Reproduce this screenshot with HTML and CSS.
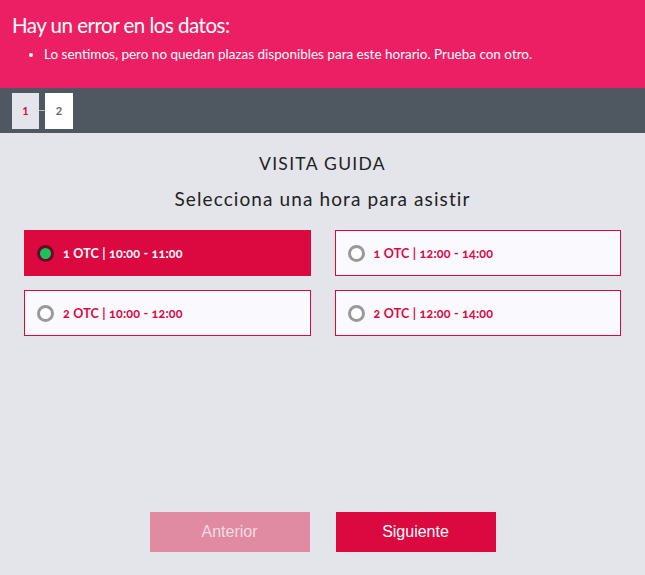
FILE: index.html
```html
<!DOCTYPE html>
<html lang="es">
<head>
    <meta charset="UTF-8">
    <meta name="viewport" content="width=device-width, initial-scale=1.0">
    <title>Visita guiada</title>
    <link rel="stylesheet" href="styles.css">
</head>
<body>
    <div class="error-box">
        <h1>Hay un error en los datos:</h1>
        <ul>
            <li>Lo sentimos, pero no quedan plazas disponibles para este horario. Prueba con otro.</li>
        </ul>
    </div>

    <div class="steps">
        <div class="step current">1</div>
        <div class="step-line"></div>
        <div class="step">2</div>
    </div>

    <div class="content">
        <h2 class="title">VISITA GUIDA</h2>
        <p class="subtitle">Selecciona una hora para asistir</p>

        <div class="slots">
            <label class="slot selected">
                <span class="radio"></span>
                <span class="slot-text">1 OTC | 10:00 - 11:00</span>
            </label>
            <label class="slot">
                <span class="radio"></span>
                <span class="slot-text">1 OTC | 12:00 - 14:00</span>
            </label>
            <label class="slot">
                <span class="radio"></span>
                <span class="slot-text">2 OTC | 10:00 - 12:00</span>
            </label>
            <label class="slot">
                <span class="radio"></span>
                <span class="slot-text">2 OTC | 12:00 - 14:00</span>
            </label>
        </div>
    </div>

    <div class="nav-buttons">
        <button class="btn disabled">Anterior</button>
        <button class="btn">Siguiente</button>
    </div>
</body>
</html>
```

FILE: styles.css
```css
body {
    margin: 0;
    height: 575px;
    font-family: Lato, "Open Sans", sans-serif;
    background-color: #e4e5ea;
    display: flex;
    flex-direction: column;
}
.error-box {
    background-color: #ec1f64;
    color: #fff;
    padding: 11px 12px 0;
    height: 77px;
}
.error-box h1 {
    margin: 0;
    font-size: 20.5px;
    font-weight: 400;
    letter-spacing: -0.5px;
    line-height: 28px;
}
.error-box ul {
    margin: 5px 0 0;
    padding-left: 32px;
    font-size: 13.5px;
    line-height: 20px;
}
.steps {
    background-color: #4f5861;
    height: 45px;
    padding: 0 12px;
    display: flex;
    align-items: center;
}
.step {
    width: 28px;
    height: 36px;
    background-color: #fff;
    color: #666;
    font-size: 11px;
    font-weight: 700;
    display: flex;
    align-items: center;
    justify-content: center;
}
.step.current {
    width: 27px;
    background-color: #e4e5ea;
    color: #dc0840;
}
.step-line {
    width: 6px;
    height: 1px;
    background-color: #bbb;
}
.content {
    flex: 1;
    padding: 0 24px;
}
.title {
    margin: 20px 0 0;
    text-align: center;
    font-size: 17.5px;
    font-weight: 400;
    letter-spacing: 1.3px;
    color: #222;
}
.subtitle {
    margin: 13px 0 0;
    text-align: center;
    font-size: 19px;
    letter-spacing: 1.1px;
    color: #222;
}
.slots {
    margin-top: 20px;
    display: grid;
    grid-template-columns: 1fr 1fr;
    column-gap: 24px;
    row-gap: 14px;
}
.slot {
    height: 46px;
    box-sizing: border-box;
    border: 1px solid #dc0840;
    background-color: #f9f9fe;
    display: flex;
    align-items: center;
    padding-left: 12px;
    cursor: pointer;
}
.slot.selected {
    background-color: #dc0840;
}
.radio {
    width: 17px;
    height: 17px;
    box-sizing: border-box;
    border: 3px solid #999;
    border-radius: 50%;
    background-color: #fff;
    margin-right: 9px;
}
.slot.selected .radio {
    border-color: #6a0a28;
    background-color: #19c35a;
}
.slot-text {
    font-size: 12.5px;
    font-weight: 700;
    font-variant-numeric: oldstyle-nums;
    letter-spacing: 0.2px;
    color: #dc0840;
}
.slot.selected .slot-text {
    color: #fff;
}
.nav-buttons {
    display: flex;
    justify-content: center;
    gap: 26px;
    padding-bottom: 23px;
}
.btn {
    width: 160px;
    height: 40px;
    border: none;
    background-color: #dc0840;
    color: #fff;
    font-family: "Liberation Sans", Arial, sans-serif;
    font-size: 16px;
    cursor: pointer;
}
.btn.disabled {
    background-color: #e08ba2;
    color: #f6dbe3;
    cursor: default;
}
```
